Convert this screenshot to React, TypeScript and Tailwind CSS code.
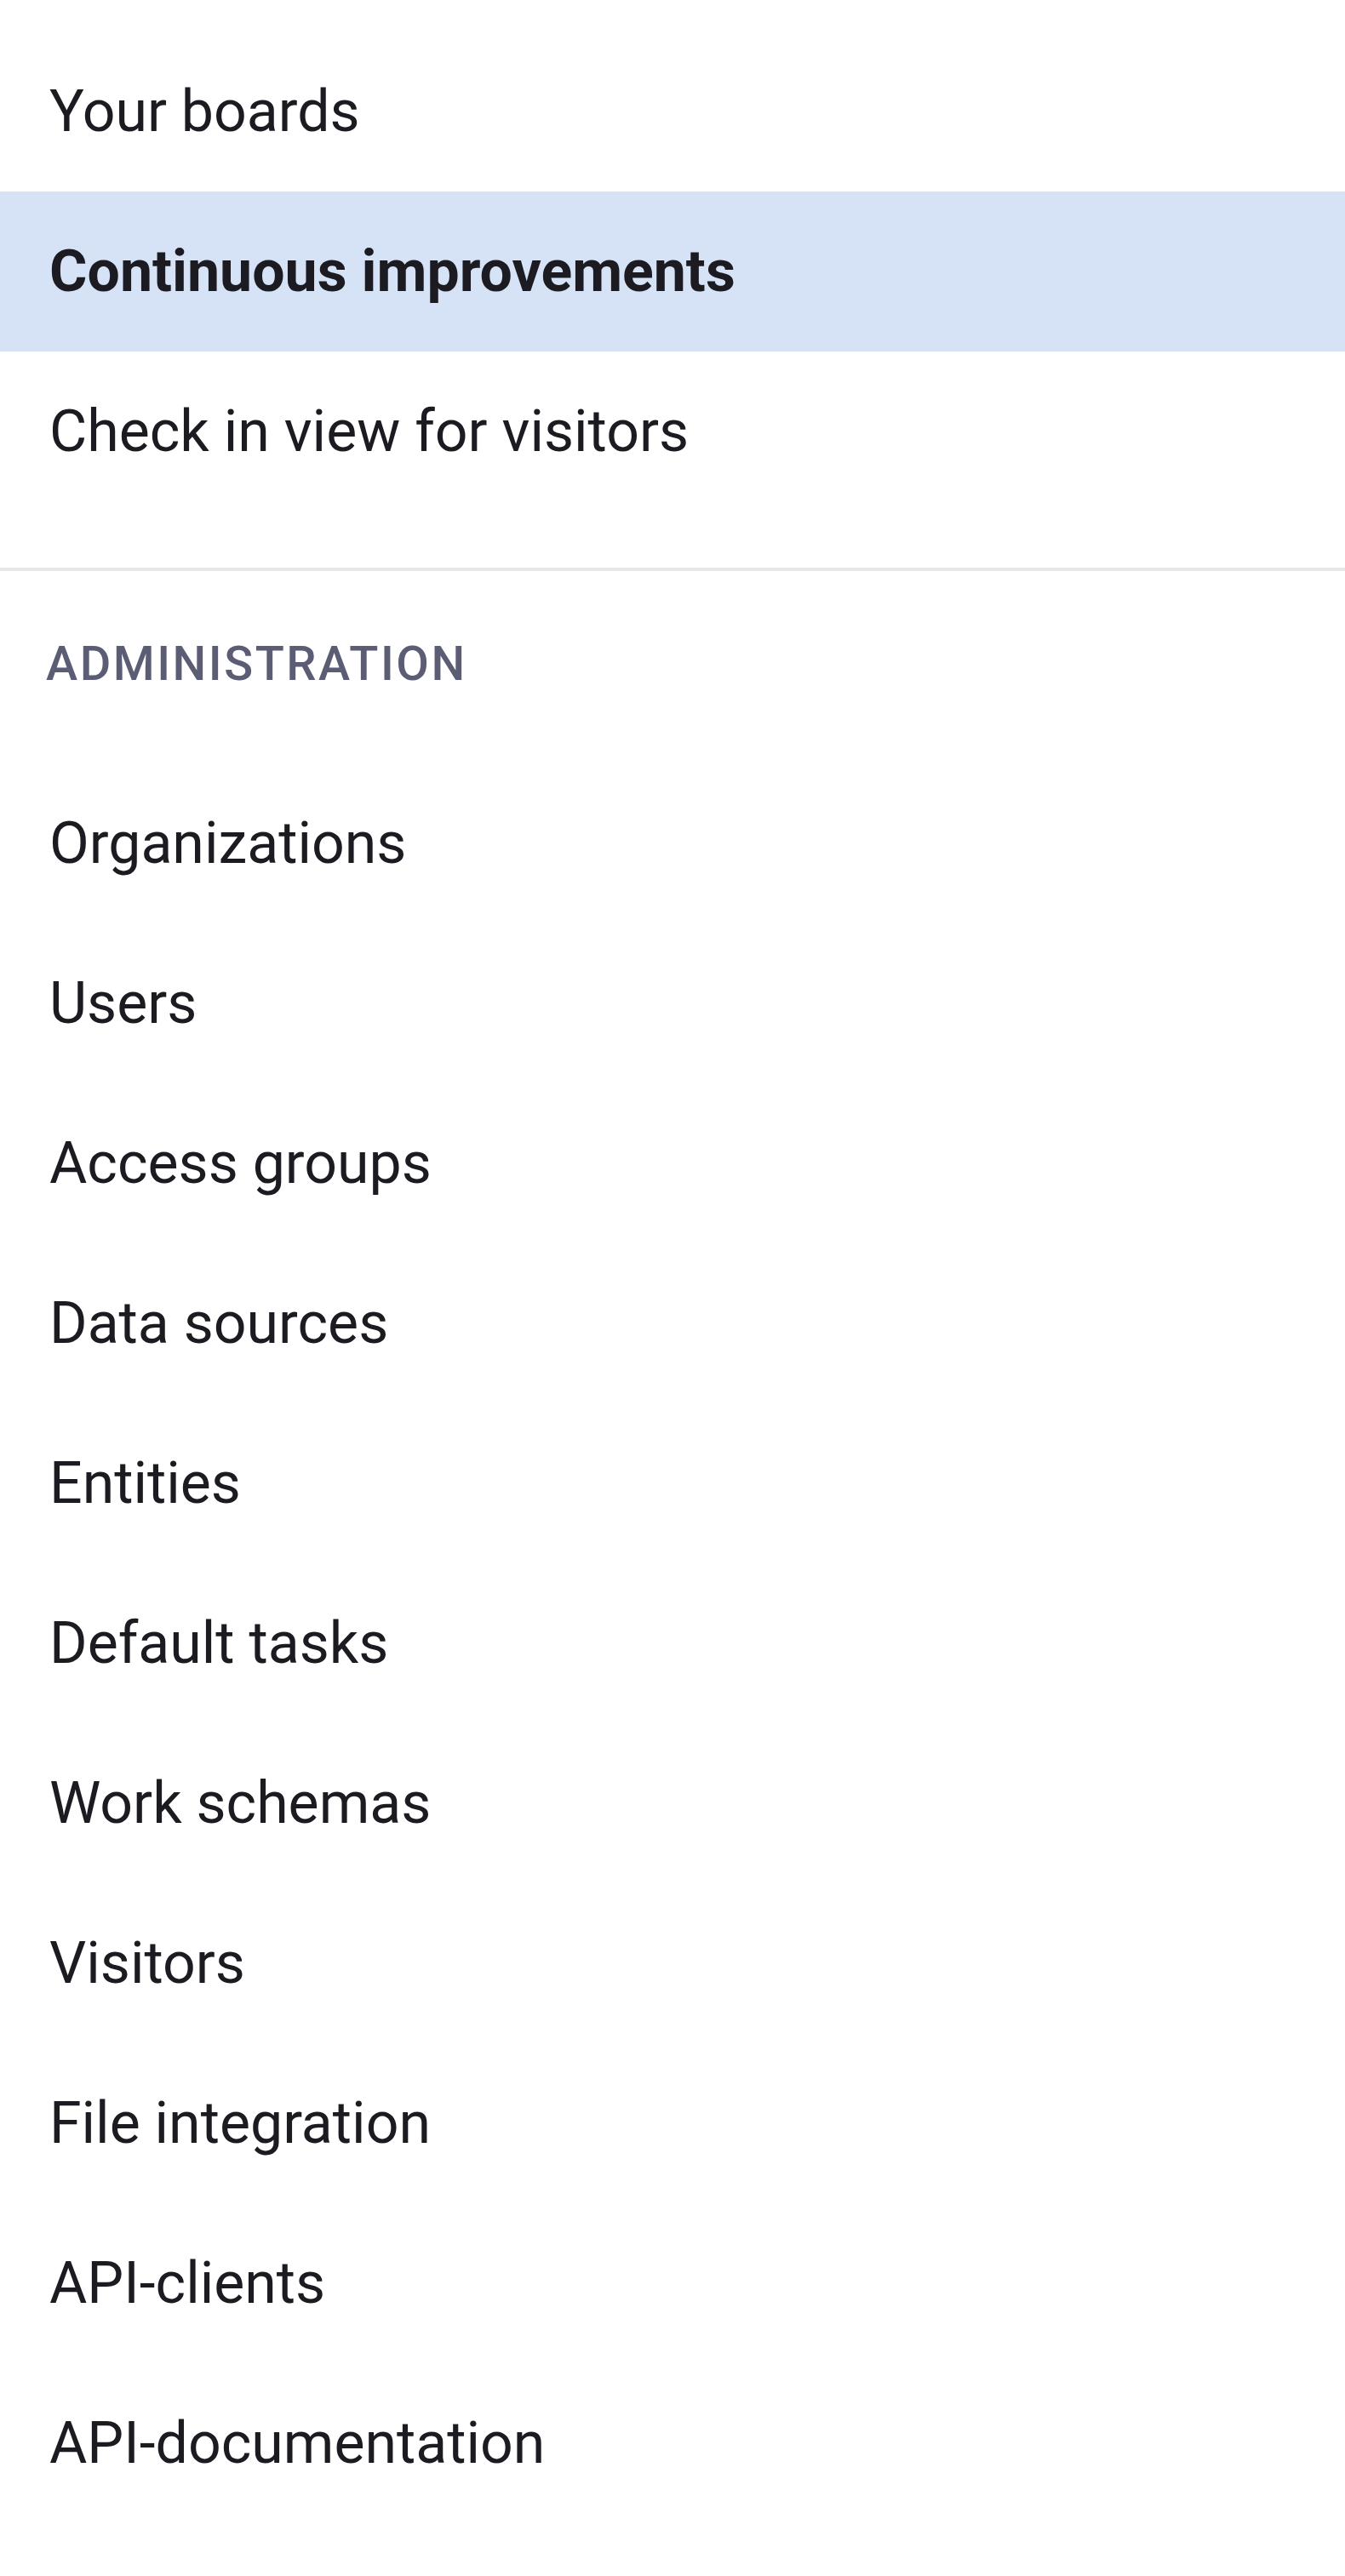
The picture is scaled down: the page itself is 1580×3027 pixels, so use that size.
const boards = ["Your boards", "Continuous improvements", "Check in view for visitors"];
const admin = [
  "Organizations",
  "Users",
  "Access groups",
  "Data sources",
  "Entities",
  "Default tasks",
  "Work schemas",
  "Visitors",
  "File integration",
  "API-clients",
  "API-documentation",
];
const ACTIVE = "Continuous improvements";

function NavItem({ label }: { label: string }) {
  const active = label === ACTIVE;
  return (
    <a
      href="#"
      className={`flex h-[188px] items-center pl-[58px] text-[68px] text-[#1c1b22] ${
        active ? "bg-[#d6e3f7] font-bold" : "font-normal"
      }`}
    >
      {label}
    </a>
  );
}

export default function App() {
  return (
    <div className="min-h-[3027px] w-full bg-white font-['Roboto',_'Noto_Sans',_sans-serif]">
      <nav className="pt-[37px]">
        {boards.map((b) => (
          <NavItem key={b} label={b} />
        ))}
      </nav>

      <div className="mt-[66px] h-[4px] bg-[#e6e6e6]" />

      <div className="pl-[54px] pt-[54px] pb-[62px] text-[56px] leading-[110px] font-medium uppercase tracking-[0.045em] text-[#5b5d74]">
        Administration
      </div>

      <nav>
        {admin.map((a) => (
          <NavItem key={a} label={a} />
        ))}
      </nav>
    </div>
  );
}
